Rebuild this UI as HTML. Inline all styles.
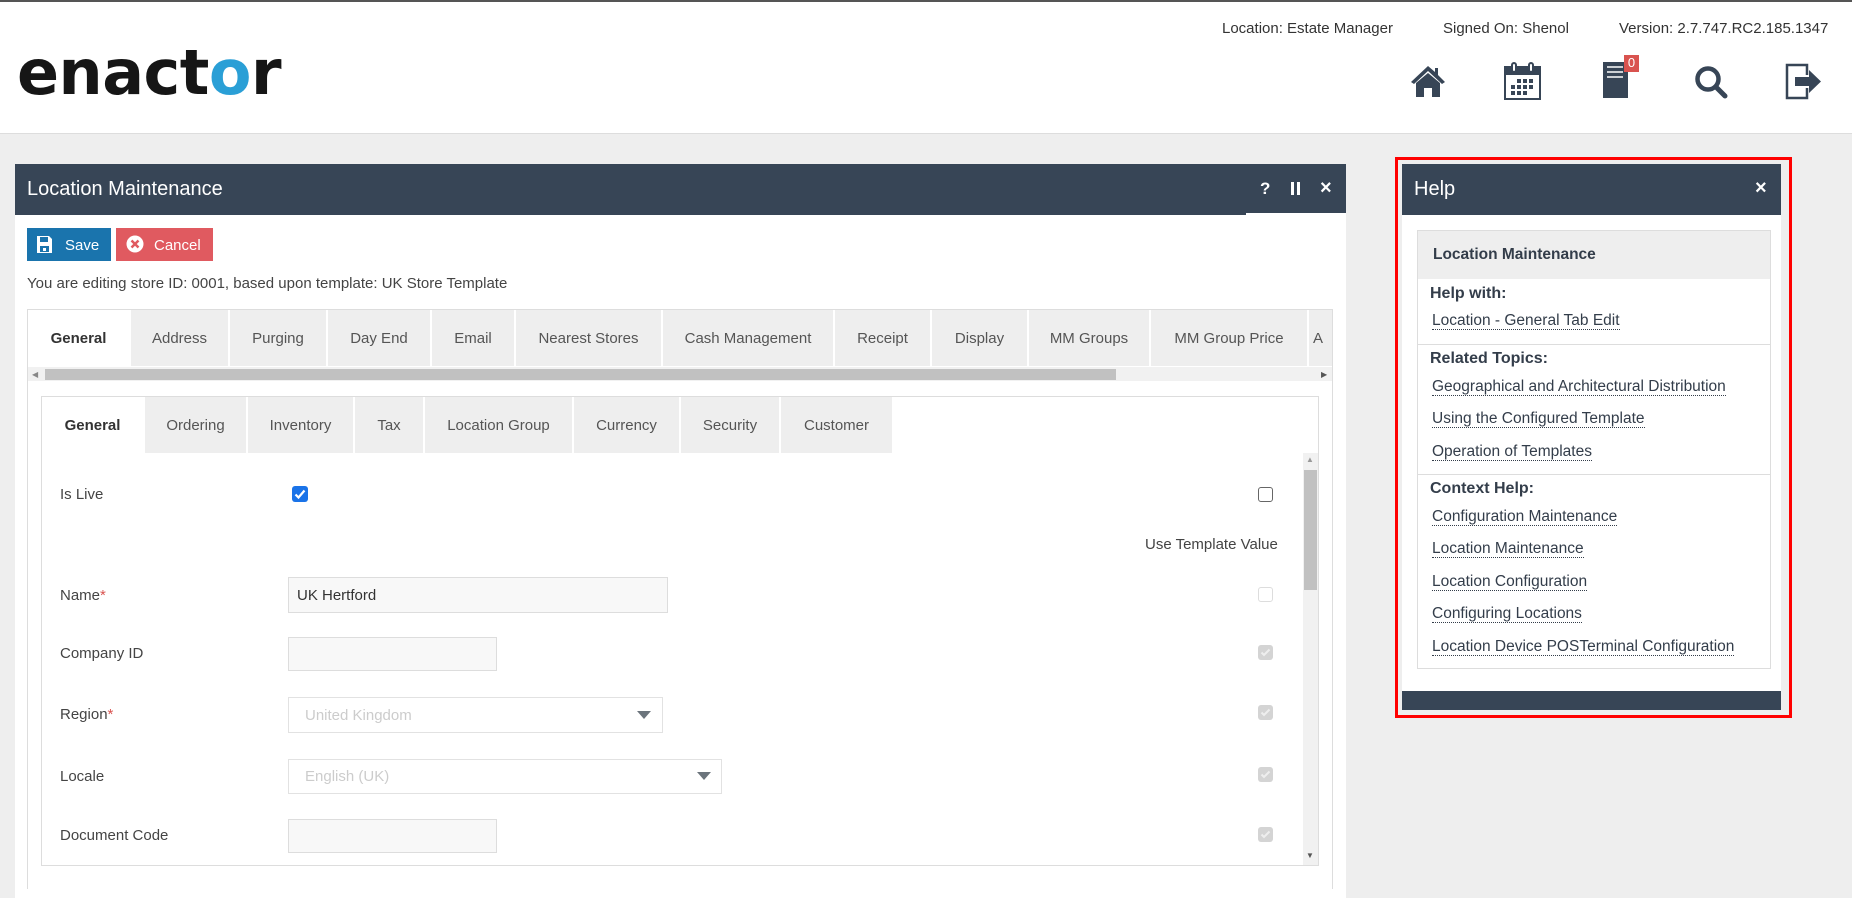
<!DOCTYPE html>
<html><head><meta charset="utf-8"><style>
*{box-sizing:border-box;margin:0;padding:0}
body{width:1852px;height:898px;overflow:hidden;background:#eeeeee;font-family:"Liberation Sans",Arial,sans-serif;color:#333;position:relative}
.a{position:absolute}
.hdr{left:0;top:0;width:1852px;height:134px;background:#fff;border-top:2px solid #555;border-bottom:1px solid #ddd}
.info{top:20px;font-size:15px;color:#333}
.dark{background:#374556}
.tabs div{position:absolute;top:0;height:100%;background:#eee;border-right:2px solid #fff;text-align:center;font-size:15px;color:#555;display:flex;align-items:center;justify-content:center}
.tabs div.act{background:#fff;color:#333;font-weight:bold}
.lbl{left:60px;font-size:15px;color:#444}
.inp{background:#f8f8f8;border:1px solid #ddd}
.sel{background:#fff;border:1px solid #e2e2e2;font-size:15px;color:#ccc;padding-left:16px;display:flex;align-items:center}
.cb{width:15px;height:15px;border-radius:3px;background:#d4d4d4}
.cb svg{display:block}
.hl{left:1432px;font-size:15.5px;color:#333d4a;border-bottom:1px dotted #333d4a;line-height:17px}
.hb{left:1430px;font-size:16px;font-weight:bold;color:#333d4a}
</style></head><body>
<div class="a hdr"></div>
<div class="a" style="left:17px;top:33px;font-size:62px;font-weight:bold;color:#161616;letter-spacing:-0.5px;line-height:80px;font-family:'DejaVu Sans','Liberation Sans',sans-serif">enact<span style="color:#2a9fd6">o</span>r</div>
<div class="a info" style="left:1222px">Location: Estate Manager</div>
<div class="a info" style="left:1443px">Signed On: Shenol</div>
<div class="a info" style="left:1619px">Version: 2.7.747.RC2.185.1347</div>
<!-- icons -->
<svg class="a" style="left:1410px;top:64px" width="36" height="34" viewBox="0 0 36 34"><path d="M18 2 L1 18 L4 20 L18 7 L32 20 L35 18 L28 11 V4 H25 V8 Z M6 19 V33 H14 V24 H22 V33 H30 V19 L18 9 Z" fill="#374556"/></svg>
<svg class="a" style="left:1504px;top:62px" width="37" height="38" viewBox="0 0 37 38"><rect x="1" y="5" width="35" height="32" fill="none" stroke="#374556" stroke-width="2"/><rect x="1" y="5" width="35" height="8" fill="#374556"/><rect x="8" y="1" width="4" height="9" rx="2" fill="#fff" stroke="#374556" stroke-width="2"/><rect x="25" y="1" width="4" height="9" rx="2" fill="#fff" stroke="#374556" stroke-width="2"/><g fill="#374556"><rect x="13" y="17" width="4" height="4"/><rect x="19" y="17" width="4" height="4"/><rect x="25" y="17" width="4" height="4"/><rect x="7" y="23" width="4" height="4"/><rect x="13" y="23" width="4" height="4"/><rect x="19" y="23" width="4" height="4"/><rect x="25" y="23" width="4" height="4"/><rect x="7" y="29" width="4" height="4"/><rect x="13" y="29" width="4" height="4"/><rect x="19" y="29" width="4" height="4"/></g></svg>
<svg class="a" style="left:1603px;top:62px" width="25" height="36" viewBox="0 0 25 36"><rect width="25" height="36" fill="#374556"/><g stroke="#fff" stroke-width="1.5"><line x1="4" y1="5" x2="20" y2="5"/><line x1="4" y1="10" x2="20" y2="10"/><line x1="4" y1="15" x2="20" y2="15"/></g></svg>
<div class="a" style="left:1624px;top:55px;width:15px;height:17px;background:#d9534f;color:#fff;font-size:13px;text-align:center;line-height:15px">0</div>
<svg class="a" style="left:1694px;top:65px" width="34" height="34" viewBox="0 0 34 34"><circle cx="14" cy="14" r="10.5" fill="none" stroke="#374556" stroke-width="4.5"/><line x1="22" y1="22" x2="31" y2="31" stroke="#374556" stroke-width="5" stroke-linecap="round"/></svg>
<svg class="a" style="left:1785px;top:63px" width="38" height="37" viewBox="0 0 38 37"><path d="M22 12 V2 H2 V35 H22 V25" fill="none" stroke="#374556" stroke-width="2.5"/><path d="M10 14 H24 V7 L36 18.5 L24 30 V23 H10 Z" fill="#374556"/></svg>

<!-- main panel -->
<div class="a" style="left:15px;top:164px;width:1331px;height:734px;background:#fff"></div>
<div class="a dark" style="left:15px;top:164px;width:1331px;height:51px"></div>
<div class="a" style="left:1246px;top:213px;width:100px;height:3px;background:#fff"></div>
<div class="a" style="left:27px;top:178px;font-size:20px;color:#fff">Location Maintenance</div>
<div class="a" style="left:1260px;top:179px;font-size:17px;color:#fff;font-weight:bold">?</div>
<div class="a" style="left:1291px;top:182px;width:3px;height:13px;background:#fff"></div>
<div class="a" style="left:1297px;top:182px;width:3px;height:13px;background:#fff"></div>
<div class="a" style="left:1320px;top:177px;font-size:20px;color:#fff;font-weight:bold">×</div>

<div class="a" style="left:27px;top:228px;width:84px;height:33px;background:#1a74ad;color:#fff;font-size:15px">
<svg class="a" style="left:10px;top:8px" width="15" height="17" viewBox="0 0 15 17"><path d="M0 0H12L15 3V17H0Z" fill="#fff"/><rect x="3" y="1" width="8" height="5" fill="#1a74ad"/><rect x="3" y="10" width="9" height="6" fill="#1a74ad"/><rect x="6" y="12" width="3" height="3" fill="#fff"/></svg>
<span class="a" style="left:38px;top:9px">Save</span></div>
<div class="a" style="left:116px;top:228px;width:97px;height:33px;background:#e05a60;color:#fff;font-size:15px">
<svg class="a" style="left:10px;top:7px" width="18" height="18" viewBox="0 0 18 18"><circle cx="9" cy="9" r="8.5" fill="#fff"/><path d="M5.5 5.5L12.5 12.5M12.5 5.5L5.5 12.5" stroke="#e05a60" stroke-width="2.5"/></svg>
<span class="a" style="left:38px;top:9px">Cancel</span></div>
<div class="a" style="left:27px;top:275px;font-size:15px;color:#444">You are editing store ID: 0001, based upon template: UK Store Template</div>

<div class="a" style="left:27px;top:309px;width:1306px;height:580px;border:1px solid #ddd;border-bottom:none"></div>
<div class="a tabs" style="left:28px;top:310px;width:1304px;height:56px;overflow:hidden">
<div class="act" style="left:0;width:103px">General</div>
<div style="left:103px;width:99px">Address</div>
<div style="left:202px;width:98px">Purging</div>
<div style="left:300px;width:104px">Day End</div>
<div style="left:404px;width:84px">Email</div>
<div style="left:488px;width:147px">Nearest Stores</div>
<div style="left:635px;width:172px">Cash Management</div>
<div style="left:807px;width:97px">Receipt</div>
<div style="left:904px;width:97px">Display</div>
<div style="left:1001px;width:122px">MM Groups</div>
<div style="left:1123px;width:158px">MM Group Price</div>
<div style="left:1281px;width:60px;justify-content:flex-start;padding-left:4px">A</div>
</div>
<div class="a" style="left:28px;top:367px;width:1304px;height:14px;background:#f1f1f1"></div>
<div class="a" style="left:45px;top:369px;width:1071px;height:11px;background:#c1c1c1"></div>
<div class="a" style="left:32px;top:370px;font-size:8px;color:#888">◀</div>
<div class="a" style="left:1321px;top:370px;font-size:8px;color:#555">▶</div>

<div class="a" style="left:41px;top:396px;width:1278px;height:470px;border:1px solid #ddd"></div>
<div class="a tabs" style="left:42px;top:397px;width:850px;height:56px">
<div class="act" style="left:0;width:103px">General</div>
<div style="left:103px;width:103px">Ordering</div>
<div style="left:206px;width:107px">Inventory</div>
<div style="left:313px;width:70px">Tax</div>
<div style="left:383px;width:149px">Location Group</div>
<div style="left:532px;width:107px">Currency</div>
<div style="left:639px;width:100px">Security</div>
<div style="left:739px;width:111px;border-right:none">Customer</div>
</div>
<div class="a" style="left:1303px;top:453px;width:15px;height:412px;background:#f1f1f1"></div>
<div class="a" style="left:1304px;top:470px;width:13px;height:120px;background:#c1c1c1"></div>
<div class="a" style="left:1306px;top:455px;font-size:8px;color:#999">▲</div>
<div class="a" style="left:1306px;top:851px;font-size:8px;color:#555">▼</div>

<div class="a lbl" style="top:486px">Is Live</div>
<div class="a" style="left:292px;top:486px;width:16px;height:16px;border-radius:3px;background:#1a73e8"><svg width="16" height="16" viewBox="0 0 16 16"><path d="M3.5 8.5L6.5 11.5L12.5 4.5" stroke="#fff" stroke-width="2.2" fill="none"/></svg></div>
<div class="a" style="left:1258px;top:487px;width:15px;height:15px;border-radius:3px;border:1px solid #666;background:#fff"></div>
<div class="a" style="left:1145px;top:536px;font-size:15px;color:#444">Use Template Value</div>

<div class="a lbl" style="top:587px">Name<span style="color:#d9534f">*</span></div>
<div class="a inp" style="left:288px;top:577px;width:380px;height:36px;font-size:15px;color:#333;padding:9px 8px">UK Hertford</div>
<div class="a" style="left:1258px;top:587px;width:15px;height:15px;border-radius:3px;border:1px solid #ddd;background:#fff"></div>

<div class="a lbl" style="top:645px">Company ID</div>
<div class="a inp" style="left:288px;top:637px;width:209px;height:34px"></div>

<div class="a lbl" style="top:706px">Region<span style="color:#d9534f">*</span></div>
<div class="a sel" style="left:288px;top:697px;width:375px;height:36px">United Kingdom</div>
<div class="a" style="left:637px;top:711px;width:0;height:0;border-left:7px solid transparent;border-right:7px solid transparent;border-top:8px solid #6b747c"></div>

<div class="a lbl" style="top:768px">Locale</div>
<div class="a sel" style="left:288px;top:759px;width:434px;height:35px">English (UK)</div>
<div class="a" style="left:697px;top:772px;width:0;height:0;border-left:7px solid transparent;border-right:7px solid transparent;border-top:8px solid #6b747c"></div>

<div class="a lbl" style="top:827px">Document Code</div>
<div class="a inp" style="left:288px;top:819px;width:209px;height:34px"></div>

<div class="a cb" style="left:1258px;top:645px"><svg width="15" height="15" viewBox="0 0 15 15"><path d="M3.5 7.5L6 10L11.5 4.5" stroke="#eee" stroke-width="2" fill="none"/></svg></div>
<div class="a cb" style="left:1258px;top:705px"><svg width="15" height="15" viewBox="0 0 15 15"><path d="M3.5 7.5L6 10L11.5 4.5" stroke="#eee" stroke-width="2" fill="none"/></svg></div>
<div class="a cb" style="left:1258px;top:767px"><svg width="15" height="15" viewBox="0 0 15 15"><path d="M3.5 7.5L6 10L11.5 4.5" stroke="#eee" stroke-width="2" fill="none"/></svg></div>
<div class="a cb" style="left:1258px;top:827px"><svg width="15" height="15" viewBox="0 0 15 15"><path d="M3.5 7.5L6 10L11.5 4.5" stroke="#eee" stroke-width="2" fill="none"/></svg></div>

<!-- help panel -->
<div class="a" style="left:1395px;top:157px;width:397px;height:561px;border:3px solid #f00"></div>
<div class="a" style="left:1402px;top:164px;width:379px;height:546px;background:#fff"></div>
<div class="a dark" style="left:1402px;top:164px;width:379px;height:51px"></div>
<div class="a" style="left:1414px;top:178px;font-size:20px;color:#fff">Help</div>
<div class="a" style="left:1755px;top:177px;font-size:20px;color:#fff;font-weight:bold">×</div>
<div class="a dark" style="left:1402px;top:691px;width:379px;height:19px"></div>
<div class="a" style="left:1417px;top:230px;width:354px;height:439px;border:1px solid #ddd"></div>
<div class="a" style="left:1418px;top:231px;width:352px;height:48px;background:#eee"></div>
<div class="a" style="left:1433px;top:246px;font-size:15.5px;font-weight:bold;color:#333d4a">Location Maintenance</div>
<div class="a hb" style="top:285px">Help with:</div>
<div class="a hl" style="top:312px">Location - General Tab Edit</div>
<div class="a" style="left:1418px;top:344px;width:352px;height:1px;background:#ddd"></div>
<div class="a hb" style="top:350px">Related Topics:</div>
<div class="a hl" style="top:378px">Geographical and Architectural Distribution</div>
<div class="a hl" style="top:410px">Using the Configured Template</div>
<div class="a hl" style="top:443px">Operation of Templates</div>
<div class="a" style="left:1418px;top:474px;width:352px;height:1px;background:#ddd"></div>
<div class="a hb" style="top:480px">Context Help:</div>
<div class="a hl" style="top:508px">Configuration Maintenance</div>
<div class="a hl" style="top:540px">Location Maintenance</div>
<div class="a hl" style="top:573px">Location Configuration</div>
<div class="a hl" style="top:605px">Configuring Locations</div>
<div class="a hl" style="top:638px">Location Device POSTerminal Configuration</div>
</body></html>
